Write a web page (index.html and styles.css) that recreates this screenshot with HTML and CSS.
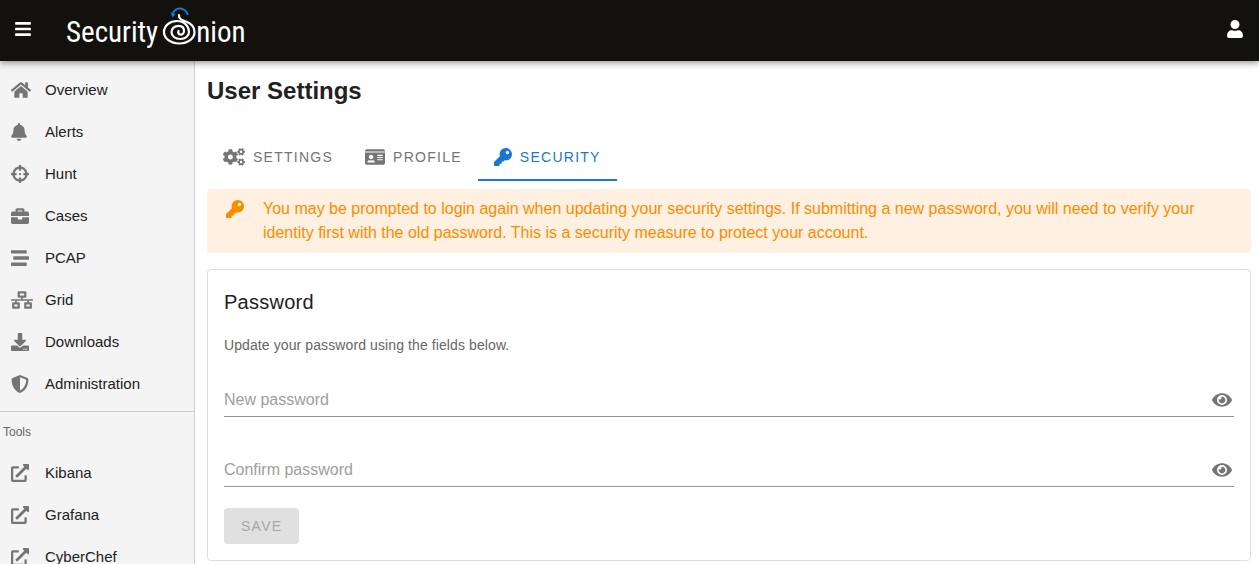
FILE: index.html
```html
<!DOCTYPE html>
<html lang="en">
<head>
<meta charset="utf-8">
<meta name="viewport" content="width=device-width, initial-scale=1">
<title>Security Onion - User Settings</title>
<link rel="stylesheet" href="styles.css">
</head>
<body>
<svg class="sprite" aria-hidden="true">
  <symbol id="home" viewBox="0 0 576 512"><path d="M280.37 148.26L96 300.11V464a16 16 0 0 0 16 16l112.06-.29a16 16 0 0 0 15.92-16V368a16 16 0 0 1 16-16h64a16 16 0 0 1 16 16v95.64a16 16 0 0 0 16 16.05L464 480a16 16 0 0 0 16-16V300L295.67 148.26a12.19 12.19 0 0 0-15.3 0zM571.6 251.47L488 182.56V44.05a12 12 0 0 0-12-12h-56a12 12 0 0 0-12 12v72.61L318.47 43a48 48 0 0 0-61 0L4.34 251.47a12 12 0 0 0-1.6 16.9l25.5 31A12 12 0 0 0 45.15 301l235.22-193.74a12.19 12.19 0 0 1 15.3 0L530.9 301a12 12 0 0 0 16.9-1.6l25.5-31a12 12 0 0 0-1.7-16.93z"/></symbol>
  <symbol id="bell" viewBox="0 0 448 512"><path d="M224 512c35.32 0 63.97-28.65 63.97-64H160.03c0 35.35 28.65 64 63.97 64zm215.39-149.71c-19.32-20.76-55.47-51.99-55.47-154.29 0-77.7-54.48-139.9-127.94-155.16V32c0-17.67-14.32-32-31.98-32s-31.98 14.33-31.98 32v20.84C118.56 68.1 64.08 130.3 64.08 208c0 102.3-36.15 133.53-55.47 154.29-6 6.45-8.66 14.16-8.61 21.71.11 16.4 12.98 32 32.1 32h383.8c19.12 0 32-15.6 32.1-32 .05-7.55-2.61-15.27-8.61-21.71z"/></symbol>
  <symbol id="crosshairs" viewBox="0 0 512 512"><path d="M500 224h-30.364C455.724 130.325 381.675 56.276 288 42.364V12c0-6.627-5.373-12-12-12h-40c-6.627 0-12 5.373-12 12v30.364C130.325 56.276 56.276 130.325 42.364 224H12c-6.627 0-12 5.373-12 12v40c0 6.627 5.373 12 12 12h30.364C56.276 381.675 130.325 455.724 224 469.636V500c0 6.627 5.373 12 12 12h40c6.627 0 12-5.373 12-12v-30.364C381.675 455.724 455.724 381.675 469.636 288H500c6.627 0 12-5.373 12-12v-40c0-6.627-5.373-12-12-12zM288 404.634V364c0-6.627-5.373-12-12-12h-40c-6.627 0-12 5.373-12 12v40.634C165.826 392.232 119.783 346.243 107.366 288H148c6.627 0 12-5.373 12-12v-40c0-6.627-5.373-12-12-12h-40.634C119.768 165.826 165.757 119.783 224 107.366V148c0 6.627 5.373 12 12 12h40c6.627 0 12-5.373 12-12v-40.634C346.174 119.768 392.217 165.757 404.634 224H364c-6.627 0-12 5.373-12 12v40c0 6.627 5.373 12 12 12h40.634C392.232 346.174 346.243 392.217 288 404.634zM288 256c0 17.673-14.327 32-32 32s-32-14.327-32-32c0-17.673 14.327-32 32-32s32 14.327 32 32z"/></symbol>
  <symbol id="briefcase" viewBox="0 0 512 512"><path d="M320 336c0 8.84-7.16 16-16 16h-96c-8.84 0-16-7.16-16-16v-48H0v144c0 25.6 22.4 48 48 48h416c25.6 0 48-22.4 48-48V288H320v48zm144-208h-80V80c0-25.6-22.4-48-48-48H176c-25.6 0-48 22.4-48 48v48H48c-25.6 0-48 22.4-48 48v80h512v-80c0-25.6-22.4-48-48-48zm-144 0H192V96h128v32z"/></symbol>
  <symbol id="stream" viewBox="0 0 512 512"><path d="M16 128h416c8.84 0 16-7.16 16-16V48c0-8.84-7.16-16-16-16H16C7.16 32 0 39.16 0 48v64c0 8.84 7.16 16 16 16zm480 80H80c-8.84 0-16 7.16-16 16v64c0 8.84 7.16 16 16 16h416c8.84 0 16-7.16 16-16v-64c0-8.84-7.16-16-16-16zm-64 176H16c-8.84 0-16 7.16-16 16v64c0 8.84 7.16 16 16 16h416c8.84 0 16-7.16 16-16v-64c0-8.84-7.16-16-16-16z"/></symbol>
  <symbol id="network" viewBox="0 0 640 512"><path d="M640 264v-16c0-8.84-7.16-16-16-16H344v-40h72c17.67 0 32-14.33 32-32V32c0-17.67-14.33-32-32-32H224c-17.67 0-32 14.33-32 32v128c0 17.67 14.33 32 32 32h72v40H16c-8.84 0-16 7.16-16 16v16c0 8.84 7.16 16 16 16h104v40H64c-17.67 0-32 14.33-32 32v128c0 17.67 14.33 32 32 32h160c17.67 0 32-14.33 32-32V352c0-17.67-14.33-32-32-32h-56v-40h304v40h-56c-17.67 0-32 14.33-32 32v128c0 17.67 14.33 32 32 32h160c17.67 0 32-14.33 32-32V352c0-17.67-14.33-32-32-32h-56v-40h104c8.84 0 16-7.16 16-16zM256 128V64h128v64H256zm-64 320H96v-64h96v64zm352 0h-96v-64h96v64z"/></symbol>
  <symbol id="download" viewBox="0 0 512 512"><path d="M216 0h80c13.3 0 24 10.7 24 24v168h87.7c17.8 0 26.7 21.5 14.1 34.1L269.7 378.3c-7.5 7.5-19.8 7.5-27.3 0L90.1 226.1c-12.6-12.6-3.7-34.1 14.1-34.1H192V24c0-13.3 10.7-24 24-24zm296 376v112c0 13.3-10.7 24-24 24H24c-13.3 0-24-10.7-24-24V376c0-13.3 10.7-24 24-24h146.7l49 49c20.1 20.1 52.5 20.1 72.6 0l49-49H488c13.3 0 24 10.7 24 24zm-124 88c0-11-9-20-20-20s-20 9-20 20 9 20 20 20 20-9 20-20zm64 0c0-11-9-20-20-20s-20 9-20 20 9 20 20 20 20-9 20-20z"/></symbol>
  <symbol id="shield" viewBox="0 0 512 512"><path d="M466.5 83.7l-192-80a48.15 48.15 0 0 0-36.9 0l-192 80C27.7 91.1 16 108.6 16 128c0 198.5 114.5 335.7 221.5 380.3 11.8 4.9 25.1 4.9 36.9 0C360.1 472.6 496 349.3 496 128c0-19.4-11.7-36.9-29.5-44.3zM256.1 446.3l-.1-381 175.9 73.3c-3.3 151.4-82.1 261.1-175.8 307.7z"/></symbol>
  <symbol id="external" viewBox="0 0 512 512"><path d="M432,320H400a16,16,0,0,0-16,16V448H64V128H208a16,16,0,0,0,16-16V80a16,16,0,0,0-16-16H48A48,48,0,0,0,0,112V464a48,48,0,0,0,48,48H400a48,48,0,0,0,48-48V336A16,16,0,0,0,432,320ZM488,0h-128c-21.37,0-32.05,25.91-17,41l35.73,35.73L135,320.37a24,24,0,0,0,0,34L157.67,377a24,24,0,0,0,34,0L435.28,133.32,471,169c15,15,41,4.5,41-17V24A24,24,0,0,0,488,0Z"/></symbol>
  <symbol id="cogs" viewBox="0 0 640 512">
    <path id="small-cog" d="M512.1 191l-8.2 14.3c-3 5.3-9.4 7.5-15.1 5.4-11.8-4.4-22.6-10.7-32.1-18.6-4.6-3.8-5.8-10.5-2.8-15.7l8.2-14.3c-6.9-8-12.3-17.3-15.9-27.4h-16.5c-6 0-11.2-4.3-12.2-10.3-2-12-2.1-24.6 0-37.1 1-6 6.2-10.4 12.2-10.4h16.5c3.6-10.1 9-19.4 15.9-27.4l-8.2-14.3c-3-5.2-1.9-11.9 2.8-15.7 9.5-7.9 20.4-14.2 32.1-18.6 5.7-2.1 12.1.1 15.1 5.4l8.2 14.3c10.5-1.9 21.2-1.9 31.7 0L552 6.3c3-5.3 9.4-7.5 15.1-5.4 11.8 4.4 22.6 10.7 32.1 18.6 4.6 3.8 5.8 10.5 2.8 15.7l-8.2 14.3c6.9 8 12.3 17.3 15.9 27.4h16.5c6 0 11.2 4.3 12.2 10.3 2 12 2.1 24.6 0 37.1-1 6-6.2 10.4-12.2 10.4h-16.5c-3.6 10.1-9 19.4-15.9 27.4l8.2 14.3c3 5.2 1.9 11.9-2.8 15.7-9.5 7.9-20.4 14.2-32.1 18.6-5.7 2.1-12.1-.1-15.1-5.4l-8.2-14.3c-10.4 1.9-21.2 1.9-31.7 0zm-10.5-58.8c38.5 29.6 82.4-14.3 52.8-52.8-38.5-29.7-82.4 14.3-52.8 52.8z"/>
    <use href="#small-cog" y="299"/>
    <path d="M386.3 286.1l33.7 16.8c10.1 5.8 14.5 18.1 10.5 29.1-8.9 24.2-26.4 46.4-42.6 65.8-7.4 8.9-20.2 11.1-30.3 5.3l-29.1-16.8c-16 13.7-34.6 24.6-54.9 31.7v33.6c0 11.6-8.3 21.6-19.7 23.6-24.6 4.2-50.4 4.4-75.9 0-11.5-2-20-11.9-20-23.6V418c-20.3-7.2-38.9-18-54.9-31.7L74 403c-10 5.8-22.9 3.6-30.3-5.3-16.2-19.4-33.3-41.6-42.2-65.7-4-10.9.4-23.2 10.5-29.1l33.3-16.8c-3.9-20.9-3.9-42.4 0-63.4L12 205.8c-10.1-5.8-14.6-18.1-10.5-29 8.9-24.2 26-46.4 42.2-65.8 7.4-8.9 20.2-11.1 30.3-5.3l29.1 16.8c16-13.7 34.6-24.6 54.9-31.7V57.1c0-11.5 8.2-21.5 19.6-23.5 24.6-4.2 50.5-4.4 76-.1 11.5 2 20 11.9 20 23.6v33.6c20.3 7.2 38.9 18 54.9 31.7l29.1-16.8c10-5.8 22.9-3.6 30.3 5.3 16.2 19.4 33.2 41.6 42.1 65.8 4 10.9.1 23.2-10 29.1l-33.7 16.8c3.9 21 3.9 42.5 0 63.5zm-117.6 21.1c59.2-77-28.7-164.9-105.7-105.7-59.2 77 28.7 164.9 105.7 105.7z"/>
  </symbol>
  <symbol id="id-card" viewBox="0 0 576 512"><path d="M528 32H48C21.5 32 0 53.5 0 80v16h576V80c0-26.5-21.5-48-48-48zM0 432c0 26.5 21.5 48 48 48h480c26.5 0 48-21.5 48-48V128H0v304zm352-232c0-4.4 3.6-8 8-8h144c4.4 0 8 3.6 8 8v16c0 4.4-3.6 8-8 8H360c-4.4 0-8-3.6-8-8v-16zm0 64c0-4.4 3.6-8 8-8h144c4.4 0 8 3.6 8 8v16c0 4.4-3.6 8-8 8H360c-4.4 0-8-3.6-8-8v-16zm0 64c0-4.4 3.6-8 8-8h144c4.4 0 8 3.6 8 8v16c0 4.4-3.6 8-8 8H360c-4.4 0-8-3.6-8-8v-16zM176 192c35.3 0 64 28.7 64 64s-28.7 64-64 64-64-28.7-64-64 28.7-64 64-64zM67.1 396.2C75.5 370.5 99.6 352 128 352h8.2c12.3 5.1 25.7 8 39.8 8s27.6-2.9 39.8-8h8.2c28.4 0 52.5 18.5 60.9 44.2 3.2 9.9-5.2 19.8-15.6 19.8H82.7c-10.4 0-18.8-10-15.6-19.8z"/></symbol>
  <symbol id="key" viewBox="0 0 512 512"><path d="M512 176.001C512 273.203 433.202 352 336 352c-11.22 0-22.19-1.062-32.827-3.069l-24.012 27.014A23.999 23.999 0 0 1 261.223 384H224v40c0 13.255-10.745 24-24 24h-40v40c0 13.255-10.745 24-24 24H24c-13.255 0-24-10.745-24-24v-78.059c0-6.365 2.529-12.47 7.029-16.971l161.802-161.802C163.108 213.814 160 195.271 160 176 160 78.798 238.797.001 335.999 0 433.488-.001 512 78.511 512 176.001zM336 128c0 26.51 21.49 48 48 48s48-21.49 48-48-21.49-48-48-48-48 21.49-48 48z"/></symbol>
  <symbol id="eye" viewBox="0 0 576 512"><path d="M572.52 241.4C518.29 135.59 410.93 64 288 64S57.68 135.64 3.48 241.41a32.35 32.35 0 0 0 0 29.19C57.71 376.41 165.07 448 288 448s230.32-71.64 284.52-177.41a32.35 32.35 0 0 0 0-29.19zM288 400a144 144 0 1 1 144-144 143.93 143.93 0 0 1-144 144zm0-240a95.31 95.31 0 0 0-25.31 3.79 47.85 47.85 0 0 1-66.9 66.9A95.78 95.78 0 1 0 288 160z"/></symbol>
  <symbol id="user" viewBox="0 0 448 512"><path d="M224 256c70.7 0 128-57.3 128-128S294.7 0 224 0 96 57.3 96 128s57.3 128 128 128zm89.6 32h-16.7c-22.2 10.2-46.9 16-72.9 16s-50.6-5.8-72.9-16h-16.7C60.2 288 0 348.2 0 422.4V464c0 26.5 21.5 48 48 48h352c26.5 0 48-21.5 48-48v-41.6c0-74.2-60.2-134.4-134.4-134.4z"/></symbol>
  <symbol id="bars" viewBox="0 0 448 512"><path d="M16 132h416c8.837 0 16-7.163 16-16V76c0-8.837-7.163-16-16-16H16C7.163 60 0 67.163 0 76v40c0 8.837 7.163 16 16 16zm0 160h416c8.837 0 16-7.163 16-16v-40c0-8.837-7.163-16-16-16H16c-8.837 0-16 7.163-16 16v40c0 8.837 7.163 16 16 16zm0 160h416c8.837 0 16-7.163 16-16v-40c0-8.837-7.163-16-16-16H16c-8.837 0-16 7.163-16 16v40c0 8.837 7.163 16 16 16z"/></symbol>
</svg>

<header class="app-bar">
  <button class="bar-button" type="button" aria-label="Toggle menu"><svg class="icon icon-16"><use href="#bars"/></svg></button>
  <a class="logo" href="#" aria-label="Security Onion">
    <span class="logo-text">Security</span>
    <svg class="logo-onion" viewBox="0 0 34 40" fill="none" stroke-linecap="round">
      <path stroke="#fff" stroke-width="2.200" d="M17 9C16.500 13 20 14 24 15.500C29.500 17.500 32.500 21 32.500 26C32.500 32.500 26 37.500 17.500 37.500C8.500 37.500 2 32.500 2 26C2 19.500 8 15 15 15C22 15 27 20 27 26C27 30.500 23 33 18.500 33C13 33 9.500 30 9.500 26C9.500 22.500 12.500 19.800 16.500 19.800C20 19.800 22 22 22 25C22 27.500 20 29 18 28.500C16.500 28 16 26.500 16.500 25"/>
      <path stroke="#1976d2" stroke-width="1.800" stroke-linecap="butt" d="M26 9C22.500 .5 13.500 .5 10.500 8"/>
      <path fill="#1976d2" d="M8.200 5.500l2 1.800 3.600 .7-3.300 3.500z"/>
    </svg>
    <span class="logo-text">nion</span>
  </a>
  <button class="bar-button account" type="button" aria-label="Account"><svg class="icon icon-16"><use href="#user"/></svg></button>
</header>

<div class="layout">
  <nav class="sidebar" aria-label="Main">
    <a class="nav-item" href="#"><span class="nav-icon"><svg class="icon icon-20"><use href="#home"/></svg></span>Overview</a>
    <a class="nav-item" href="#"><span class="nav-icon"><svg class="icon icon-16"><use href="#bell"/></svg></span>Alerts</a>
    <a class="nav-item" href="#"><span class="nav-icon"><svg class="icon"><use href="#crosshairs"/></svg></span>Hunt</a>
    <a class="nav-item" href="#"><span class="nav-icon"><svg class="icon"><use href="#briefcase"/></svg></span>Cases</a>
    <a class="nav-item" href="#"><span class="nav-icon"><svg class="icon"><use href="#stream"/></svg></span>PCAP</a>
    <a class="nav-item" href="#"><span class="nav-icon"><svg class="icon icon-22"><use href="#network"/></svg></span>Grid</a>
    <a class="nav-item" href="#"><span class="nav-icon"><svg class="icon"><use href="#download"/></svg></span>Downloads</a>
    <a class="nav-item" href="#"><span class="nav-icon"><svg class="icon"><use href="#shield"/></svg></span>Administration</a>
    <hr class="divider">
    <div class="nav-heading">Tools</div>
    <a class="nav-item" href="#"><span class="nav-icon"><svg class="icon"><use href="#external"/></svg></span>Kibana</a>
    <a class="nav-item" href="#"><span class="nav-icon"><svg class="icon"><use href="#external"/></svg></span>Grafana</a>
    <a class="nav-item" href="#"><span class="nav-icon"><svg class="icon"><use href="#external"/></svg></span>CyberChef</a>
  </nav>

  <main class="content">
    <h2 class="page-title">User Settings</h2>
    <div class="tabs" role="tablist">
      <button class="tab" type="button" role="tab" aria-selected="false"><svg class="icon icon-22"><use href="#cogs"/></svg>SETTINGS</button>
      <button class="tab" type="button" role="tab" aria-selected="false"><svg class="icon icon-20"><use href="#id-card"/></svg>PROFILE</button>
      <button class="tab tab-active" type="button" role="tab" aria-selected="true"><svg class="icon"><use href="#key"/></svg>SECURITY</button>
    </div>
    <div class="alert" role="alert">
      <svg class="icon alert-icon"><use href="#key"/></svg>
      <p class="alert-text">You may be prompted to login again when updating your security settings. If submitting a new password, you will need to verify your identity first with the old password. This is a security measure to protect your account.</p>
    </div>
    <form class="card">
      <h3 class="card-title">Password</h3>
      <p class="card-text">Update your password using the fields below.</p>
      <div class="field">
        <input class="field-input" type="password" placeholder="New password" aria-label="New password">
        <button class="field-toggle" type="button" aria-label="Show new password"><svg class="icon icon-20"><use href="#eye"/></svg></button>
      </div>
      <div class="field">
        <input class="field-input" type="password" placeholder="Confirm password" aria-label="Confirm password">
        <button class="field-toggle" type="button" aria-label="Show confirm password"><svg class="icon icon-20"><use href="#eye"/></svg></button>
      </div>
      <button class="save" type="submit" disabled>SAVE</button>
    </form>
  </main>
</div>
</body>
</html>
```

FILE: styles.css
```css
* { box-sizing: border-box; }

body {
  margin: 0;
  height: 100vh;
  display: flex;
  flex-direction: column;
  overflow: hidden;
  background: #fff;
  color: #212121;
  font-family: "Liberation Sans", Arial, sans-serif;
  font-size: 16px;
}

button {
  border: 0;
  padding: 0;
  background: none;
  color: inherit;
  font: inherit;
  cursor: pointer;
}

.sprite { display: none; }

.icon {
  display: block;
  flex: none;
  width: 18px;
  height: 18px;
  fill: currentColor;
}
.icon-16 { width: 16px; }
.icon-20 { width: 20px; }
.icon-22 { width: 22px; }

.app-bar {
  position: relative;
  z-index: 1;
  flex: none;
  display: flex;
  align-items: center;
  height: 61px;
  padding: 0 16px 3px 15px;
  background: #12110d;
  color: #fff;
  box-shadow: 0 2px 4px -1px rgba(0, 0, 0, .2), 0 4px 5px rgba(0, 0, 0, .14), 0 1px 10px rgba(0, 0, 0, .12);
}
.account { margin-left: auto; }

.logo {
  display: flex;
  align-self: flex-start;
  align-items: flex-start;
  margin-left: 35px;
  padding-top: 6px;
  color: #fff;
  text-decoration: none;
}
.logo-text {
  font-family: "Roboto Condensed", Roboto, sans-serif;
  font-size: 29px;
  font-weight: 400;
  line-height: 52px;
}
.logo-onion {
  width: 34px;
  height: 40px;
  margin-left: 4px;
}

.layout {
  flex: 1;
  display: flex;
  min-height: 0;
}

.sidebar {
  flex: none;
  width: 195px;
  padding-top: 8px;
  overflow: hidden;
  background: #f4f4f4;
  border-right: 1px solid #d0d0d0;
}
.nav-item {
  display: flex;
  align-items: center;
  height: 42px;
  padding-left: 11px;
  color: #212121;
  font-size: 15px;
  line-height: 18px;
  text-decoration: none;
}
.nav-icon {
  width: 34px;
  color: #757575;
}
.divider {
  margin: 6px 0 0;
  border: 0;
  border-top: 1px solid #d0d0d0;
}
.nav-heading {
  padding-left: 3px;
  color: #666;
  font-size: 12px;
  line-height: 40px;
}

.content {
  flex: 1;
  min-width: 0;
  padding: 12px 8px 0 12px;
}
.page-title {
  margin: 0 0 24px;
  font-size: 24px;
  line-height: 36px;
}

.tabs { display: flex; }
.tab {
  display: flex;
  align-items: center;
  gap: 8px;
  height: 48px;
  padding: 0 16px;
  color: #757575;
  font-size: 14px;
  letter-spacing: .09em;
}
.tab-active {
  color: #1976d2;
  box-shadow: inset 0 -2px #1976d2;
}

.alert {
  display: flex;
  gap: 19px;
  margin-top: 8px;
  padding: 8px 16px 8px 19px;
  border-radius: 4px;
  background: #fff0e1;
  color: #fb8c00;
}
.alert-icon { margin-top: 3px; }
.alert-text {
  margin: 0;
  line-height: 24px;
}

.card {
  margin-top: 16px;
  padding: 16px;
  border: 1px solid #dedede;
  border-radius: 4px;
}
.card-title {
  margin: 0;
  font-size: 20px;
  font-weight: 400;
  letter-spacing: .0125em;
  line-height: 32px;
}
.card-text {
  margin: 16px 0;
  color: #666;
  font-size: 14px;
  letter-spacing: .0071em;
  line-height: 22px;
}
.field {
  display: flex;
  align-items: center;
  height: 34px;
  margin-bottom: 36px;
  padding-right: 2px;
  border-bottom: 1px solid #949494;
}
.card-text + .field { margin-top: 27px; }
.field-input {
  flex: 1;
  min-width: 0;
  height: 32px;
  padding: 0;
  border: 0;
  outline: 0;
  background: none;
  color: #212121;
  font: inherit;
}
.field-input::placeholder {
  color: #9e9e9e;
  opacity: 1;
}
.field-toggle { color: #757575; }

.save {
  display: block;
  height: 36px;
  margin-top: -15px;
  padding: 0 17px;
  border-radius: 4px;
  background: #e0e0e0;
  color: #a6a6a6;
  font-size: 14px;
  letter-spacing: .09em;
}
```
